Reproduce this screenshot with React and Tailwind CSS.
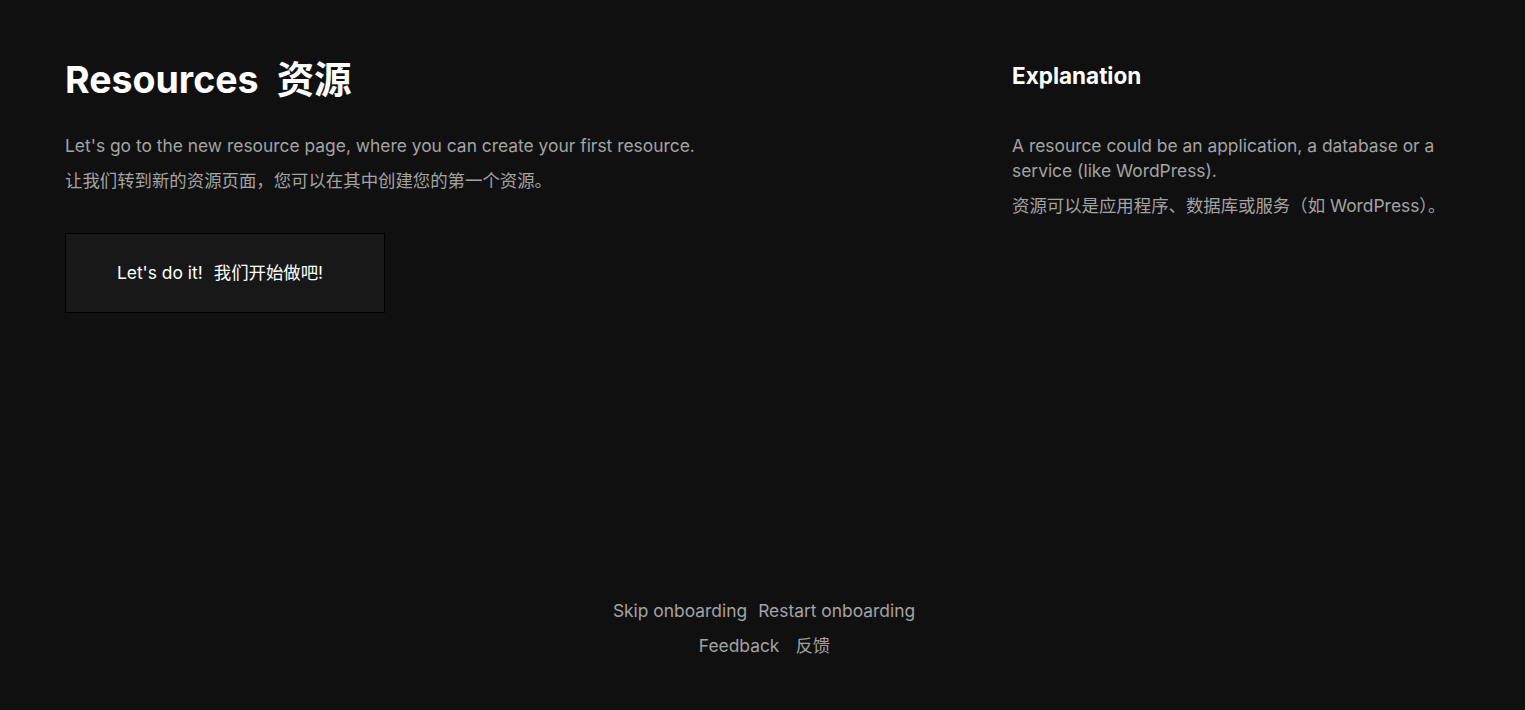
import React from "react";

const font = { fontFamily: 'Inter, "Noto Sans CJK SC", sans-serif' };

const App = () => {
  return (
    <div
      className="min-h-screen w-full bg-[#101010] text-white flex flex-col"
      style={font}
    >
      <div className="flex justify-between items-start px-[65px] pt-[60px]">
        <div>
          <h1 className="text-[37.5px] font-bold flex gap-[18px] leading-10">
            <span>Resources</span>
            <span>资源</span>
          </h1>
          <p className="mt-[34px] text-[17.4px] leading-6 text-[#a3a3a3]">
            Let's go to the new resource page, where you can create your first resource.
          </p>
          <p className="mt-[11px] text-[17.4px] leading-6 text-[#a3a3a3]">
            让我们转到新的资源页面，您可以在其中创建您的第一个资源。
          </p>
          <button className="mt-[40px] w-[320px] h-[80px] bg-[#181818] border border-black text-[17.4px] text-white flex items-center justify-center gap-[11px] pr-[10px]">
            <span>Let's do it!</span>
            <span>我们开始做吧!</span>
          </button>
        </div>
        <div className="w-[448px] pt-[2px]">
          <h2 className="text-[22.5px] font-bold leading-7">Explanation</h2>
          <p className="mt-[43px] text-[17.4px] leading-[25px] text-[#a3a3a3]">
            A resource could be an application, a database or a service (like WordPress).
          </p>
          <p className="mt-[11px] text-[17.4px] leading-6 text-[#a3a3a3]">
            资源可以是应用程序、数据库或服务（如 WordPress）。
          </p>
        </div>
      </div>
      <div className="mt-auto pb-[50px] flex flex-col items-center text-[17.4px] text-[#a3a3a3] leading-7 gap-[7px]">
        <div className="flex gap-[11px] pl-[3px]">
          <a className="cursor-pointer hover:text-white">Skip onboarding</a>
          <a className="cursor-pointer hover:text-white">Restart onboarding</a>
        </div>
        <div className="flex gap-[16px] pl-[4px]">
          <a className="cursor-pointer hover:text-white">Feedback</a>
          <a className="cursor-pointer hover:text-white">反馈</a>
        </div>
      </div>
    </div>
  );
};

export default App;
